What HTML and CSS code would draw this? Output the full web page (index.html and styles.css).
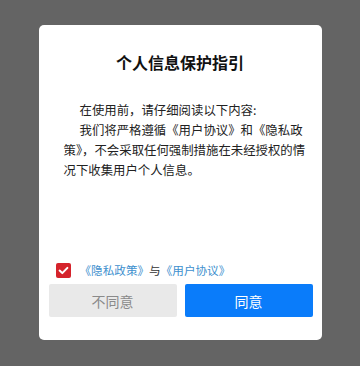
FILE: index.html
```html
<!DOCTYPE html>
<html lang="zh-CN">
<head>
<meta charset="utf-8">
<link rel="stylesheet" href="styles.css">
</head>
<body>
<div class="dialog">
  <h1 class="title">个人信息保护指引</h1>
  <div class="content">
    <p class="para">在使用前，请仔细阅读以下内容:</p>
    <p class="para">我们将严格遵循《用户协议》和《隐私政策》，不会采取任何强制措施在未经授权的情况下收集用户个人信息。</p>
  </div>
  <div class="agree">
    <span class="check"><svg width="15" height="15" viewBox="0 0 15 15"><path d="M3.6 7.6 L6.3 10.1 L11.4 4.9" fill="none" stroke="#fff" stroke-width="2" stroke-linecap="round" stroke-linejoin="round"/></svg></span>
    <span class="links"><a class="link">《隐私政策》</a><span class="and">与</span><a class="link">《用户协议》</a></span>
  </div>
  <div class="actions">
    <button class="btn btn-cancel">不同意</button>
    <button class="btn btn-ok">同意</button>
  </div>
</div>
</body>
</html>
```
FILE: styles.css
```css
html, body {
  margin: 0;
  padding: 0;
}
body {
  width: 360px;
  height: 366px;
  background: #646464;
  display: flex;
  justify-content: center;
  align-items: flex-start;
  font-family: "Noto Sans CJK SC", "Noto Sans", sans-serif;
}
.dialog {
  margin-top: 25px;
  width: 283px;
  height: 315px;
  background: #fff;
  border-radius: 5px;
  display: flex;
  flex-direction: column;
  box-sizing: border-box;
  padding: 26px 0 23px;
}
.title {
  margin: 0;
  font-size: 16px;
  line-height: 22px;
  font-weight: 700;
  text-align: center;
  color: #111;
}
.content {
  flex: 1;
  padding: 27px 0 0 25px;
  width: 242px;
}
.para {
  margin: 0;
  font-size: 12.4px;
  line-height: 20px;
  color: #222;
  text-indent: 16px;
}
.agree {
  display: flex;
  align-items: center;
  padding-left: 17px;
  height: 15px;
  margin-bottom: 6px;
}
.check {
  width: 15px;
  height: 15px;
  background: #d5232b;
  border-radius: 2px;
  display: flex;
}
.links {
  margin-left: 9px;
  font-size: 11.6px;
  line-height: 15px;
}
.link {
  color: #3d8fce;
}
.and {
  color: #333;
}
.actions {
  display: flex;
  gap: 8px;
  padding: 0 9px 0 10px;
}
.btn {
  flex: 1;
  height: 33px;
  border: none;
  border-radius: 2px;
  font-family: inherit;
  font-size: 14px;
  padding: 0;
}
.btn-cancel {
  background: #e9e9e9;
  color: #8a8a8a;
}
.btn-ok {
  background: #0a7cfa;
  color: #fff;
}
```
